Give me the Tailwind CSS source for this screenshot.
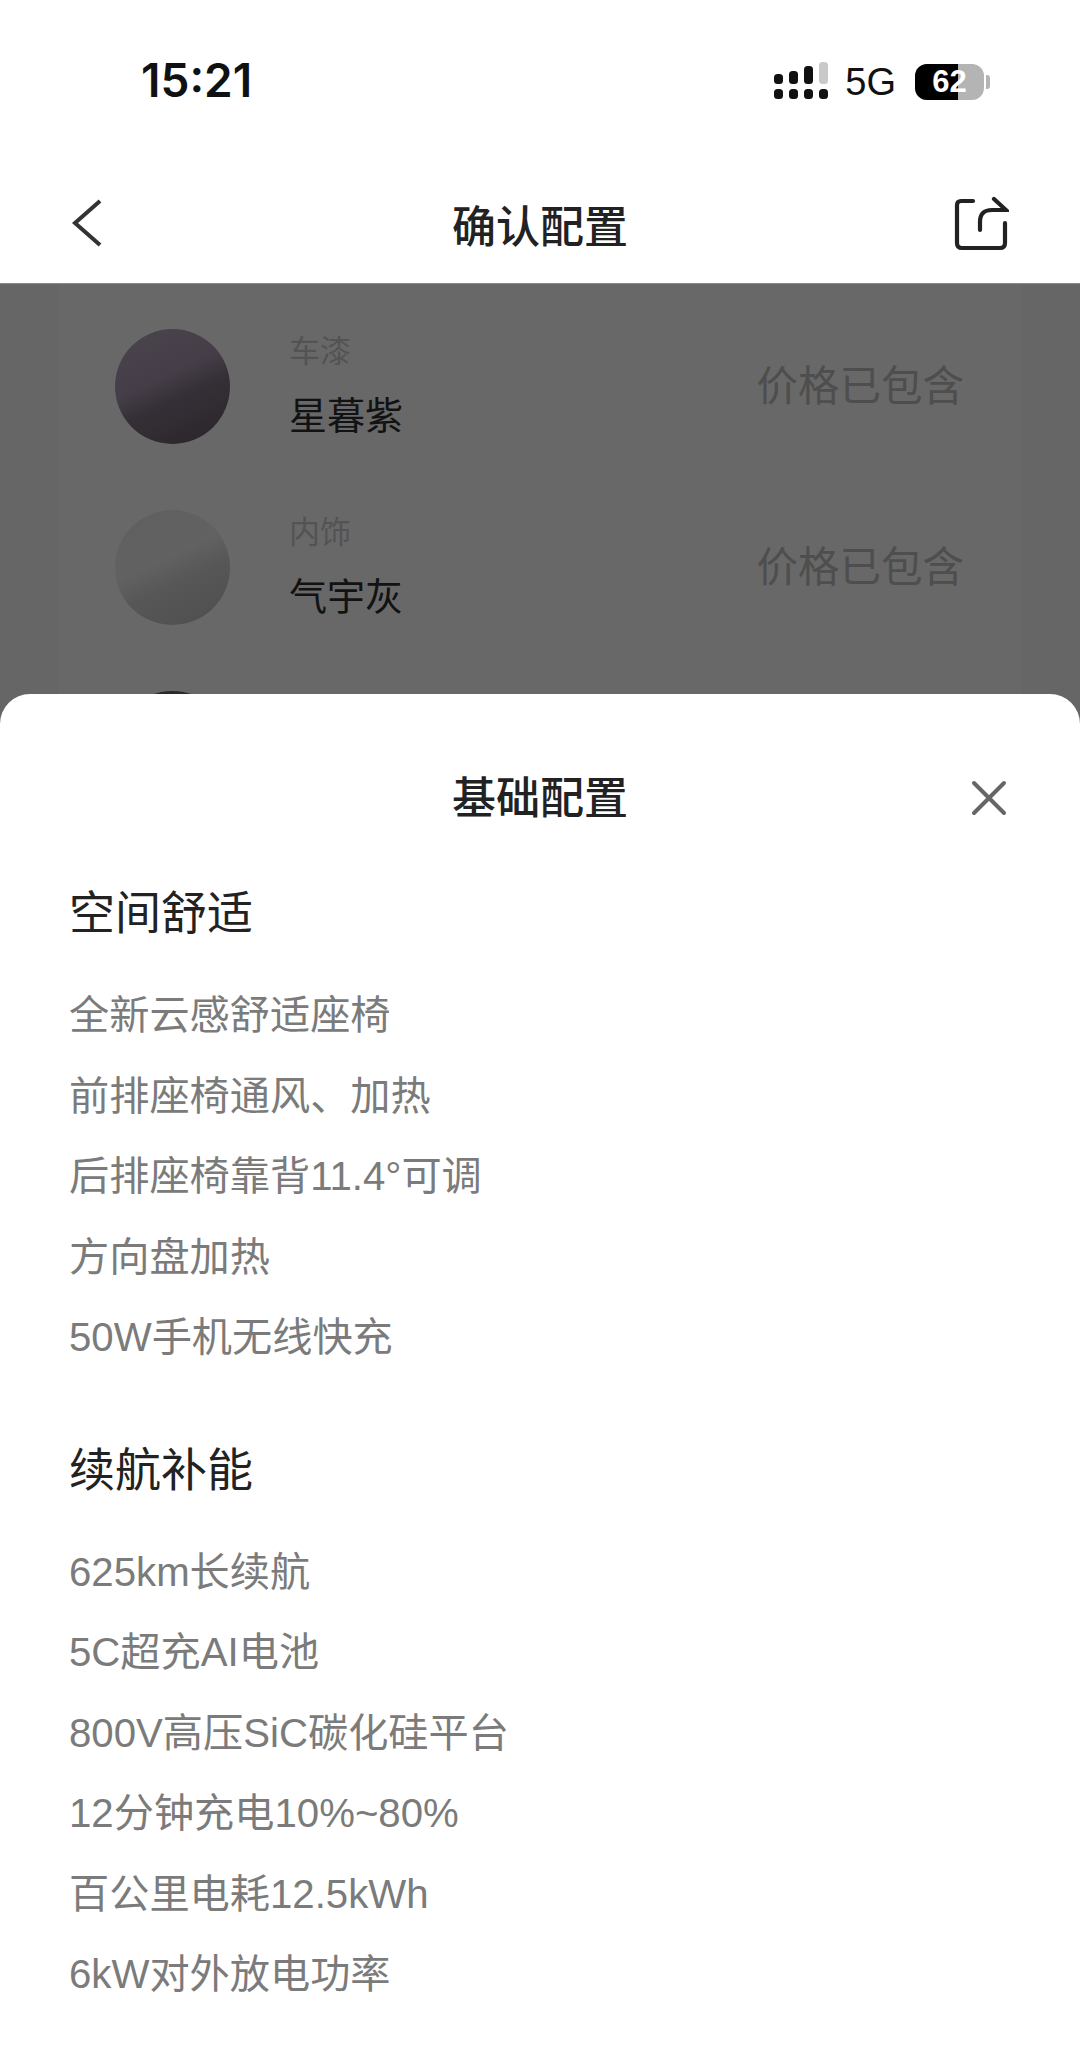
<!DOCTYPE html>
<html lang="zh">
<head>
<meta charset="utf-8">
<script src="https://cdn.jsdelivr.net/npm/@tailwindcss/browser@4"></script>
</head>
<body class="m-0 bg-white">
<div class="relative w-[1080px] h-[2052px] overflow-hidden bg-white flex flex-col font-['Liberation_Sans','Noto_Sans_CJK_SC',sans-serif]">
  <!-- status bar -->
  <div class="h-[162px] shrink-0 flex items-start justify-between pl-[141px] pr-[90px] pt-[52px]">
    <span class="text-[46px] leading-[56px] font-semibold text-[#111] font-['Inter',sans-serif]">15:21</span>
    <div class="flex items-center h-[56px] mt-[2px]">
      <svg width="54" height="38" viewBox="0 0 54 38" class="block -mt-[2px]">
        <g fill="#111">
          <rect x="0" y="12" width="9" height="10" rx="3.500"/>
          <rect x="15" y="9" width="9" height="13" rx="3.500"/>
          <rect x="30" y="4" width="9" height="18" rx="3.500"/>
          <rect x="0" y="27" width="9" height="10" rx="3.500"/>
          <rect x="15" y="27" width="9" height="10" rx="3.500"/>
          <rect x="30" y="27" width="9" height="10" rx="3.500"/>
          <rect x="45" y="27" width="9" height="10" rx="3.500"/>
        </g>
        <rect x="45" y="0" width="9" height="22" rx="3.500" fill="#c9c9c9"/>
      </svg>
      <span class="text-[38px] leading-[44px] text-[#111] font-['Liberation_Sans',sans-serif] ml-[17px]">5G</span>
      <div class="relative w-[69px] h-[36px] rounded-[12px] bg-[#b4b4b4] overflow-hidden ml-[19px]">
        <div class="absolute left-0 top-0 bottom-0 w-[43px] bg-black"></div>
        <span class="absolute inset-0 flex items-center justify-center text-[31px] font-bold text-white font-['Liberation_Sans',sans-serif]">62</span>
      </div>
      <div class="w-[4px] h-[14px] bg-[#b4b4b4] rounded-r-[3px] ml-[2px]"></div>
    </div>
  </div>
  <!-- header -->
  <div class="h-[121px] shrink-0 relative flex items-center justify-between pl-[71px] pr-[71px]">
    <svg width="32" height="48" viewBox="0 0 32 48" fill="none" class="block"><path d="M29 2 L4 24 L29 46" stroke="#333" stroke-width="4"/></svg>
    <span class="text-[44px] leading-[60px] font-medium text-[#222] absolute left-0 right-0 text-center top-[36px]">确认配置</span>
    <svg width="56" height="56" viewBox="0 0 56 56" fill="none" class="block mt-[3px]"><path d="M20 5 H8 Q4 5 4 9 V47 Q4 52 9 52 H47 Q52 52 52 47 V27" stroke="#222" stroke-width="4.200" stroke-linecap="round"/><path d="M27 34 V26 Q27 14 39 14 H53 L41 3" stroke="#222" stroke-width="4.200" stroke-linecap="round"/></svg>
  </div>
  <!-- dimmed content -->
  <div class="flex-1 bg-[#666666] px-[58px] border-t border-[#8a8a8a]">
    <div class="bg-[#686868] h-full pl-[57px] pr-[58px]">
      <div class="h-[181px] pt-[45px] flex items-start gap-[59px]">
        <div class="w-[115px] h-[115px] rounded-full shrink-0 bg-[linear-gradient(155deg,#4a444d_0%,#453e48_42%,#352f37_58%,#2a2529_100%)]"></div>
        <div class="flex-1 flex flex-col">
          <span class="text-[31px] leading-[40px] text-[#535353] mt-[3px]">车漆</span>
          <span class="text-[38px] leading-[50px] text-[#121212] mt-[19px]">星暮紫</span>
        </div>
        <span class="text-[41.500px] leading-[60px] text-[#4e4e4e] mt-[28px]">价格已包含</span>
      </div>
      <div class="h-[181px] pt-[45px] flex items-start gap-[59px]">
        <div class="w-[115px] h-[115px] rounded-full shrink-0 bg-[linear-gradient(155deg,#5f5f5f_0%,#626262_42%,#575757_60%,#4e4e4e_100%)]"></div>
        <div class="flex-1 flex flex-col">
          <span class="text-[31px] leading-[40px] text-[#535353] mt-[3px]">内饰</span>
          <span class="text-[38px] leading-[50px] text-[#121212] mt-[19px]">气宇灰</span>
        </div>
        <span class="text-[41.500px] leading-[60px] text-[#4e4e4e] mt-[28px]">价格已包含</span>
      </div>
      <div class="h-[181px] pt-[45px]">
        <div class="w-[115px] h-[115px] rounded-full bg-[#2a2a2a]"></div>
      </div>
    </div>
  </div>
  <!-- sheet -->
  <div class="absolute left-0 right-0 top-[694px] bottom-0 bg-white rounded-t-[30px] px-[69px]">
    <div class="relative h-[156px] flex items-start justify-center pt-[75px]">
      <span class="text-[44px] leading-[60px] font-medium text-[#222]">基础配置</span>
      <svg width="36" height="36" viewBox="0 0 36 36" fill="none" class="absolute right-[4px] top-[86px]"><path d="M3 3 L33 33 M33 3 L3 33" stroke="#666" stroke-width="4" stroke-linecap="round"/></svg>
    </div>
    <h2 class="text-[46px] leading-[60px] font-normal text-[#222] mt-[33px]">空间舒适</h2>
    <ul class="mt-[33px] text-[40.200px] leading-[80.500px] text-[#7b7b7b]">
      <li>全新云感舒适座椅</li>
      <li>前排座椅通风、加热</li>
      <li>后排座椅靠背11.4°可调</li>
      <li>方向盘加热</li>
      <li>50W手机无线快充</li>
    </ul>
    <h2 class="text-[46px] leading-[60px] font-normal text-[#222] mt-[61px]">续航补能</h2>
    <ul class="mt-[33px] text-[40.200px] leading-[80.500px] text-[#7b7b7b]">
      <li>625km长续航</li>
      <li>5C超充AI电池</li>
      <li>800V高压SiC碳化硅平台</li>
      <li>12分钟充电10%~80%</li>
      <li>百公里电耗12.5kWh</li>
      <li>6kW对外放电功率</li>
    </ul>
  </div>
</div>
</body>
</html>
